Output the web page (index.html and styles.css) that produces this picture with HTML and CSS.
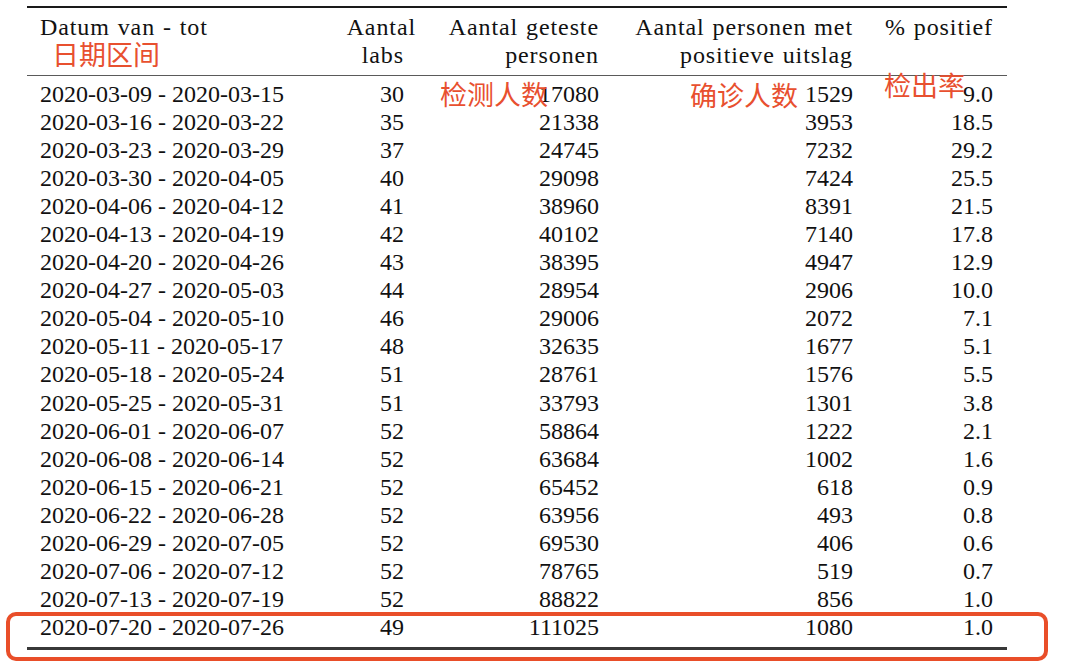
FILE: index.html
```html
<!DOCTYPE html>
<html lang="nl">
<head>
<meta charset="utf-8">
<title>Tabel</title>
<link rel="stylesheet" href="styles.css">
</head>
<body>
<div class="sheet">
  <table class="data">
    <colgroup>
      <col class="c1"><col class="c2"><col class="c3"><col class="c4"><col class="c5">
    </colgroup>
    <thead>
      <tr>
        <th class="left">Datum van - tot</th>
        <th class="num labs"><span class="wide">Aantal</span><span class="sub">labs</span></th>
        <th class="num">Aantal geteste<br>personen</th>
        <th class="num">Aantal personen met<br>positieve uitslag</th>
        <th class="num">% positief<br>&nbsp;</th>
      </tr>
    </thead>
    <tbody>
      <tr><td>2020-03-09 - 2020-03-15</td><td>30</td><td>17080</td><td>1529</td><td>9.0</td></tr>
      <tr><td>2020-03-16 - 2020-03-22</td><td>35</td><td>21338</td><td>3953</td><td>18.5</td></tr>
      <tr><td>2020-03-23 - 2020-03-29</td><td>37</td><td>24745</td><td>7232</td><td>29.2</td></tr>
      <tr><td>2020-03-30 - 2020-04-05</td><td>40</td><td>29098</td><td>7424</td><td>25.5</td></tr>
      <tr><td>2020-04-06 - 2020-04-12</td><td>41</td><td>38960</td><td>8391</td><td>21.5</td></tr>
      <tr><td>2020-04-13 - 2020-04-19</td><td>42</td><td>40102</td><td>7140</td><td>17.8</td></tr>
      <tr><td>2020-04-20 - 2020-04-26</td><td>43</td><td>38395</td><td>4947</td><td>12.9</td></tr>
      <tr><td>2020-04-27 - 2020-05-03</td><td>44</td><td>28954</td><td>2906</td><td>10.0</td></tr>
      <tr><td>2020-05-04 - 2020-05-10</td><td>46</td><td>29006</td><td>2072</td><td>7.1</td></tr>
      <tr><td>2020-05-11 - 2020-05-17</td><td>48</td><td>32635</td><td>1677</td><td>5.1</td></tr>
      <tr><td>2020-05-18 - 2020-05-24</td><td>51</td><td>28761</td><td>1576</td><td>5.5</td></tr>
      <tr><td>2020-05-25 - 2020-05-31</td><td>51</td><td>33793</td><td>1301</td><td>3.8</td></tr>
      <tr><td>2020-06-01 - 2020-06-07</td><td>52</td><td>58864</td><td>1222</td><td>2.1</td></tr>
      <tr><td>2020-06-08 - 2020-06-14</td><td>52</td><td>63684</td><td>1002</td><td>1.6</td></tr>
      <tr><td>2020-06-15 - 2020-06-21</td><td>52</td><td>65452</td><td>618</td><td>0.9</td></tr>
      <tr><td>2020-06-22 - 2020-06-28</td><td>52</td><td>63956</td><td>493</td><td>0.8</td></tr>
      <tr><td>2020-06-29 - 2020-07-05</td><td>52</td><td>69530</td><td>406</td><td>0.6</td></tr>
      <tr><td>2020-07-06 - 2020-07-12</td><td>52</td><td>78765</td><td>519</td><td>0.7</td></tr>
      <tr><td>2020-07-13 - 2020-07-19</td><td>52</td><td>88822</td><td>856</td><td>1.0</td></tr>
      <tr><td>2020-07-20 - 2020-07-26</td><td>49</td><td>111025</td><td>1080</td><td>1.0</td></tr>
    </tbody>
  </table>

  <span class="note note-date">日期区间</span>
  <span class="note note-tested">检测人数</span>
  <span class="note note-pos">确诊人数</span>
  <span class="note note-rate">检出率</span>
  <div class="highlight"></div>
</div>
</body>
</html>
```

FILE: styles.css
```css
html, body {
  margin: 0;
  padding: 0;
  background: #ffffff;
}

.sheet {
  position: relative;
  width: 1080px;
  height: 670px;
  overflow: hidden;
  padding-top: 6px;
  box-sizing: border-box;
}

.data {
  margin-left: 27px;
  width: 980px;
  table-layout: fixed;
  border-collapse: separate;
  border-spacing: 0;
  font-family: "Liberation Serif", "Times New Roman", "DejaVu Serif", serif;
  font-size: 24px;
  line-height: 28.1px;
  color: #111111;
}

.c1 { width: 313px; }
.c2 { width: 78px; }
.c3 { width: 195px; }
.c4 { width: 254px; }
.c5 { width: 140px; }

.data th {
  font-weight: normal;
  letter-spacing: 0.9px;
  word-spacing: 1px;
  line-height: 28px;
  padding: 5px 14px 5.5px 0;
  border-top: 2px solid #1a1a1a;
  border-bottom: 1px solid #5a5a5a;
  vertical-align: top;
  text-align: right;
  white-space: nowrap;
}

.data th.left {
  text-align: left;
  padding-left: 13px;
}

.data th.labs {
  padding-right: 2px;
}

.data th .wide,
.data th .sub {
  display: block;
}

.data th .sub {
  padding-right: 12px;
}

.data td {
  padding: 0 14px 0 0;
  text-align: right;
  white-space: nowrap;
}

.data td:first-child {
  text-align: left;
  padding-left: 13px;
}

.data td:last-child {
  padding-right: 14px;
}

.data tbody tr:first-child td {
  padding-top: 4px;
}

.data tbody tr:last-child td {
  padding-bottom: 6px;
  border-bottom: 3px solid #383838;
}

.note {
  position: absolute;
  font-family: "Noto Sans CJK SC", "Noto Sans", sans-serif;
  font-size: 27px;
  line-height: 1;
  color: #e8502f;
  white-space: nowrap;
}

.note-date { left: 52px; top: 40px; }
.note-tested { left: 440px; top: 80px; }
.note-pos { left: 690px; top: 81px; }
.note-rate { left: 884px; top: 71px; }

.highlight {
  position: absolute;
  left: 6px;
  top: 612px;
  width: 1042px;
  height: 49px;
  box-sizing: border-box;
  border: 4px solid #e94e29;
  border-radius: 10px;
}
```
